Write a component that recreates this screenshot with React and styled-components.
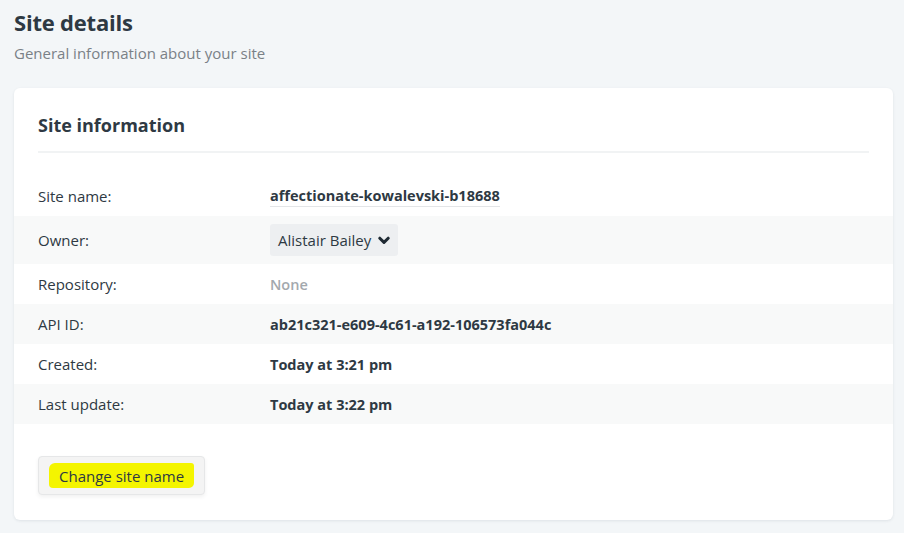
import React from "react";
import styled, { createGlobalStyle } from "styled-components";

const GlobalStyle = createGlobalStyle`
  body {
    margin: 0;
    background: #f3f6f8;
    font-family: "Open Sans", "Noto Sans", sans-serif;
    color: #2e3943;
  }
`;

const Page = styled.div`
  padding: 6px 11px 13px 14px;
`;
const Title = styled.h1`
  margin: 0;
  font-size: 22px;
  font-weight: 700;
  line-height: 32px;
  letter-spacing: -0.2px;
`;
const Subtitle = styled.p`
  margin: 4px 0 0;
  font-size: 15px;
  line-height: 22px;
  color: #7a8187;
`;
const Card = styled.section`
  margin-top: 24px;
  background: #fff;
  border-radius: 6px;
  box-shadow: 0 1px 3px rgba(40, 60, 80, 0.1);
  padding: 24px 0 25px;
`;
const CardHeader = styled.h2`
  margin: 0 24px;
  padding-bottom: 13px;
  border-bottom: 2px solid #f1f3f4;
  font-size: 18px;
  font-weight: 700;
  line-height: 26px;
`;
const Rows = styled.div`
  margin-top: 23px;
`;
const Row = styled.div`
  display: grid;
  grid-template-columns: 232px 1fr;
  align-items: center;
  padding: 0 24px;
  height: ${p => p.h || 40}px;
  background: ${p => (p.shaded ? "#f8f9f9" : "transparent")};
`;
const Label = styled.span`
  font-size: 15px;
`;
const Value = styled.span`
  font-size: 14.5px;
  font-weight: ${p => (p.muted ? 600 : 700)};
  color: ${p => (p.muted ? "#a3a8ad" : "#2e3943")};
`;
const Underlined = styled(Value)`
  justify-self: start;
  border-bottom: 1px solid #e3e5e7;
  padding-bottom: 1px;
`;
const Select = styled.button`
  justify-self: start;
  display: flex;
  align-items: center;
  gap: 7px;
  height: 32px;
  padding: 0 8px;
  border: none;
  border-radius: 3px;
  background: #edeff1;
  font-family: inherit;
  font-size: 15px;
  color: #2e3943;
`;
const Footer = styled.div`
  padding: 32px 24px 0;
`;
const Button = styled.button`
  display: inline-flex;
  align-items: center;
  height: 39px;
  padding: 0 10px;
  border: 1px solid #e6e7e8;
  border-radius: 4px;
  background: #f4f4f4;
  box-shadow: 0 2px 4px rgba(0, 0, 0, 0.06);
  font-family: inherit;
  font-size: 15px;
  color: #2e3943;
`;
const Highlight = styled.span`
  background: #f4f500;
  padding: 3px 10px 2px;
  border-radius: 6px 3px 5px 4px;
`;

const Chevron = () => (
  <svg width="12" height="9" viewBox="0 0 12 9">
    <path
      d="M1.8 2.2 L6 6.4 L10.2 2.2"
      fill="none"
      stroke="#1f2a33"
      strokeWidth="3"
      strokeLinecap="round"
      strokeLinejoin="round"
    />
  </svg>
);

const rows = [
  { label: "Site name:", kind: "name", value: "affectionate-kowalevski-b18688" },
  { label: "Owner:", kind: "select", value: "Alistair Bailey", shaded: true, h: 48 },
  { label: "Repository:", kind: "muted", value: "None" },
  { label: "API ID:", value: "ab21c321-e609-4c61-a192-106573fa044c", shaded: true },
  { label: "Created:", value: "Today at 3:21 pm" },
  { label: "Last update:", value: "Today at 3:22 pm", shaded: true }
];

const renderValue = r => {
  if (r.kind === "name") return <Underlined>{r.value}</Underlined>;
  if (r.kind === "select")
    return (
      <Select>
        {r.value}
        <Chevron />
      </Select>
    );
  if (r.kind === "muted") return <Value muted>{r.value}</Value>;
  return <Value>{r.value}</Value>;
};

export default function App() {
  return (
    <Page>
      <GlobalStyle />
      <Title>Site details</Title>
      <Subtitle>General information about your site</Subtitle>
      <Card>
        <CardHeader>Site information</CardHeader>
        <Rows>
          {rows.map(r => (
            <Row key={r.label} shaded={r.shaded} h={r.h}>
              <Label>{r.label}</Label>
              {renderValue(r)}
            </Row>
          ))}
        </Rows>
        <Footer>
          <Button>
            <Highlight>Change site name</Highlight>
          </Button>
        </Footer>
      </Card>
    </Page>
  );
}
